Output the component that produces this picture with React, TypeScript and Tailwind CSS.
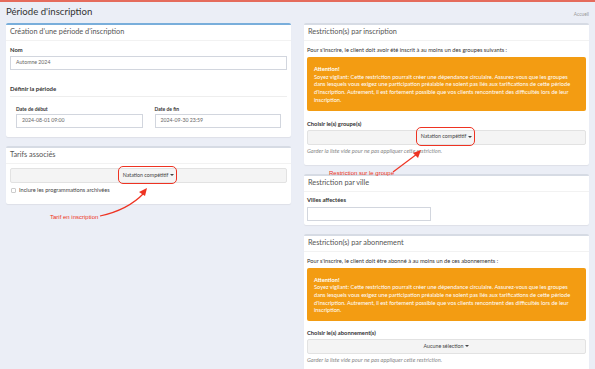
import React from 'react'

const warning = "Soyez vigilant: Cette restriction pourrait créer une dépendance circulaire. Assurez-vous que les groupes dans lesquels vous exigez une participation préalable ne soient pas liés aux tarifications de cette période d'inscription. Autrement, il est fortement possible que vos clients rencontrent des difficultés lors de leur inscription."

function Card({ title, primary, children }: { title: string; primary?: boolean; children: React.ReactNode }) {
  return (
    <div className={`bg-white rounded-[2px] border-t-2 shadow-[0_1px_1px_rgba(0,0,0,0.06)] ${primary ? 'border-t-[#79aedb]' : 'border-t-[#d6dbe4]'}`}>
      <div className="h-[16px] flex items-center px-[4px] border-b border-[#f2f2f2] text-[7.3px] text-[#555]">{title}</div>
      <div className="px-[3px]">{children}</div>
    </div>
  )
}

function Caret() {
  return <span className="inline-block ml-[2px] align-middle w-0 h-0 border-x-[2px] border-x-transparent border-t-[2px] border-t-[#444]" />
}

function SelectButton({ label, circled }: { label: string; circled?: boolean }) {
  return (
    <div className="h-[15px] flex items-center justify-center bg-[#f4f4f4] border border-[#e2e2e2] rounded-[2px] text-[5.3px] text-[#444]">
      <span className="relative">
        {label}<Caret />
        {circled && <span className="absolute -left-[5px] -right-[3px] -top-[6px] -bottom-[5px] border-[1.5px] border-[#ee3322] rounded-[5px]" />}
      </span>
    </div>
  )
}

function Alert() {
  return (
    <div className="bg-[#f39c12] rounded-[2px] px-[7px] pt-[8px] pb-[7px] text-white text-[5.65px] leading-[7.7px]">
      <div className="font-bold">Attention!</div>
      <div>{warning}</div>
    </div>
  )
}

function Label({ children }: { children: React.ReactNode }) {
  return <div className="font-bold text-[5.8px] text-[#333] leading-[8px]">{children}</div>
}

function Help({ children }: { children: React.ReactNode }) {
  return <div className="italic text-[5.7px] text-[#888] leading-[8px]">{children}</div>
}

function Input({ value, className = '' }: { value?: string; className?: string }) {
  return (
    <div className={`h-[14px] border border-[#d2d6de] bg-white flex items-center px-[5px] text-[5.2px] text-[#666] ${className}`}>{value}</div>
  )
}

export default function App() {
  return (
    <div className="relative w-[595px] h-[369px] overflow-hidden bg-[#ebeef6] border-t-2 border-t-[#e56b5c] font-[family-name:Lato,sans-serif]">
      <div className="flex items-start justify-between px-[6px] pt-[3px] h-[21px]">
        <h1 className="text-[9.6px] text-[#333] leading-[14px]">Période d'inscription</h1>
        <span className="text-[4.8px] text-[#999] mt-[6px]">Accueil</span>
      </div>

      <div className="grid grid-cols-2 gap-x-[13px] px-[6px] items-start">
        <div className="flex flex-col gap-[9px]">
          <Card title="Création d'une période d'inscription" primary>
            <div className="px-[1px] pt-[5px] pb-[9px]">
              <Label>Nom</Label>
              <Input value="Automne 2024" className="mt-[2px]" />
              <div className="mt-[15px] font-bold text-[6px] text-[#333] leading-[8px] pb-[3px] border-b border-[#eee]">Définir la période</div>
              <div className="grid grid-cols-2 gap-x-[12px] px-[6px] mt-[9px]">
                <div>
                  <div className="font-bold text-[5px] text-[#333] leading-[7px]">Date de début</div>
                  <Input value="2024-08-01 09:00" className="mt-[1px] h-[13px]" />
                </div>
                <div>
                  <div className="font-bold text-[5px] text-[#333] leading-[7px]">Date de fin</div>
                  <Input value="2024-09-30 23:59" className="mt-[1px] h-[13px]" />
                </div>
              </div>
            </div>
          </Card>

          <Card title="Tarifs associés">
            <div className="px-[1px] pt-[4px] pb-[10px]">
              <SelectButton label="Natation compétitif" circled />
              <div className="flex items-center gap-[3px] mt-[3px] pl-[1px] text-[5.6px] text-[#444]">
                <span className="w-[5px] h-[5px] border border-[#ccc] rounded-[1px] bg-white" />
                Inclure les programmations archivées
              </div>
            </div>
          </Card>
        </div>

        <div className="flex flex-col gap-[9px]">
          <Card title="Restriction(s) par inscription">
            <div className="pt-[5px] pb-[10px]">
              <div className="text-[5.7px] text-[#333] leading-[8px]">Pour s'inscrire, le client doit avoir été inscrit à au moins un des groupes suivants :</div>
              <div className="mt-[3px]"><Alert /></div>
              <div className="mt-[9px]"><Label>Choisir le(s) groupe(s)</Label></div>
              <div className="mt-[2px]"><SelectButton label="Natation compétitif" circled /></div>
              <div className="mt-[2px]"><Help>Garder la liste vide pour ne pas appliquer cette restriction.</Help></div>
            </div>
          </Card>

          <Card title="Restriction par ville">
            <div className="pt-[4px] pb-[4px]">
              <Label>Villes affectées</Label>
              <Input className="mt-[3px] w-[124px]" />
            </div>
          </Card>

          <Card title="Restriction(s) par abonnement">
            <div className="pt-[5px] pb-[9px]">
              <div className="text-[5.7px] text-[#333] leading-[8px]">Pour s'inscrire, le client doit être abonné à au moins un de ces abonnements :</div>
              <div className="mt-[3px]"><Alert /></div>
              <div className="mt-[8px]"><Label>Choisir le(s) abonnement(s)</Label></div>
              <div className="mt-[2px]"><SelectButton label="Aucune sélection" /></div>
              <div className="mt-[2px]"><Help>Garder la liste vide pour ne pas appliquer cette restriction.</Help></div>
            </div>
          </Card>
        </div>
      </div>

      {/* annotations */}
      <span className="absolute left-[50px] top-[211px] text-[6px] text-[#ee3322] font-[family-name:'Liberation_Sans',sans-serif]">Tarif en inscription</span>
      <span className="absolute left-[329px] top-[167px] text-[6px] text-[#ee3322] font-[family-name:'Liberation_Sans',sans-serif]">Restriction sur le groupe</span>
      <svg className="absolute left-0 top-0 pointer-events-none" width="595" height="369" viewBox="0 0 595 369">
        <path d="M100 214 Q128 208 144 191" fill="none" stroke="#ee3322" strokeWidth="1.2" />
        <polygon points="147,186 139,190 145,194" fill="#ee3322" />
        <path d="M393 170 L417 152" fill="none" stroke="#ee3322" strokeWidth="1.2" />
        <polygon points="421,148 413,151 418,156" fill="#ee3322" />
      </svg>
    </div>
  )
}
